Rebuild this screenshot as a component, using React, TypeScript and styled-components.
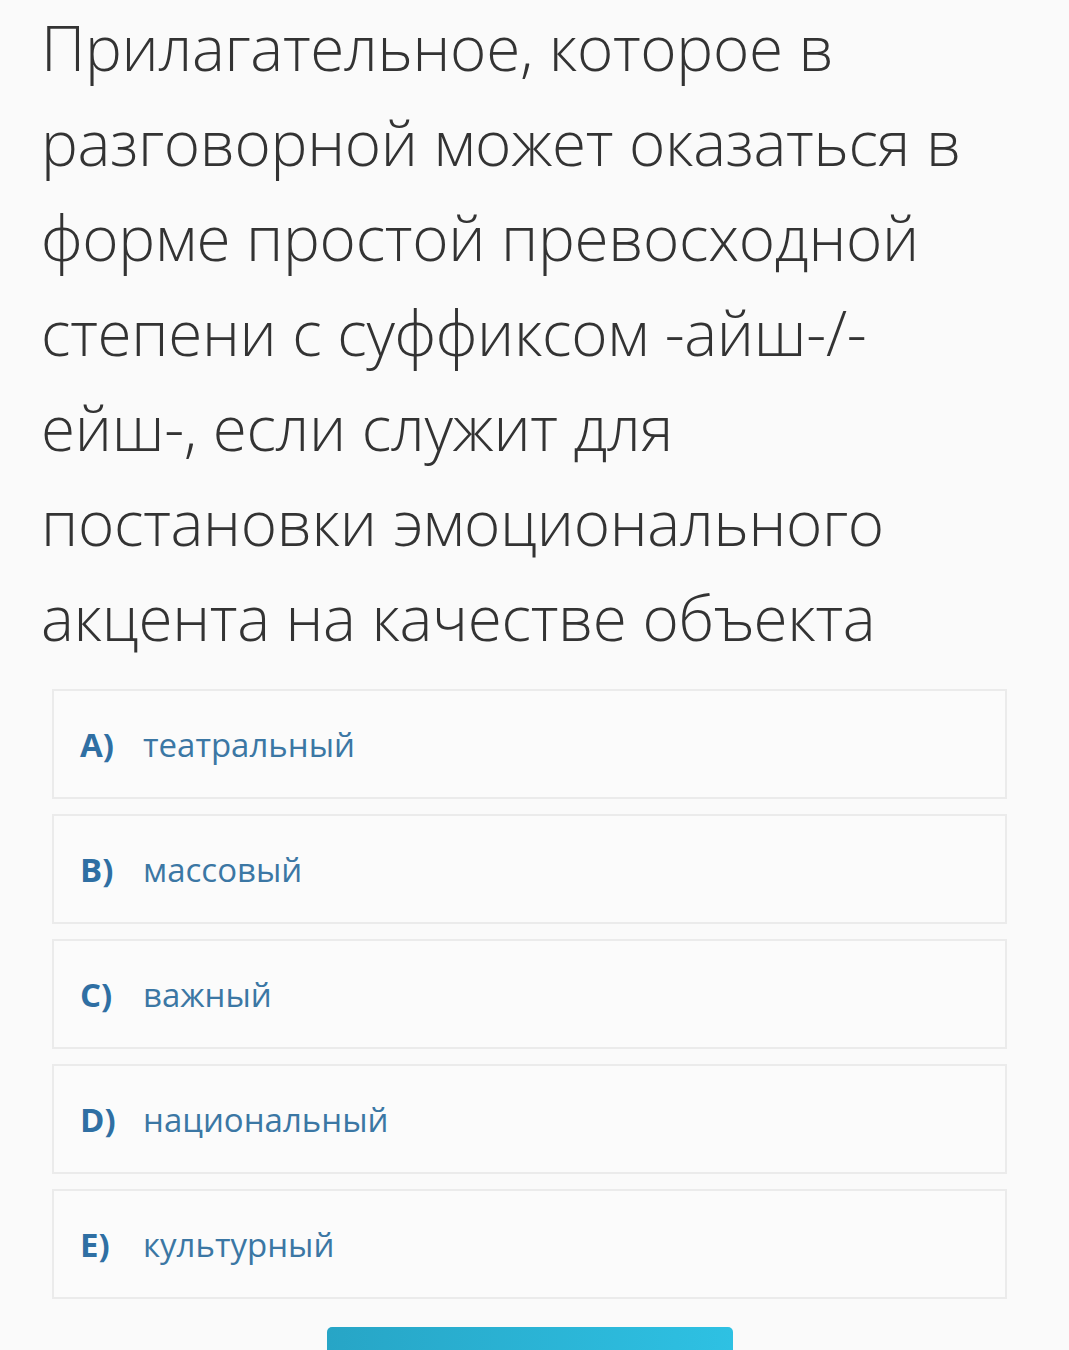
import { createGlobalStyle, styled } from "styled-components";

const GlobalStyle = createGlobalStyle`
  html, body {
    margin: 0;
    padding: 0;
    background: #fafafa;
  }
  body {
    font-family: "Open Sans", "Noto Sans", sans-serif;
  }
`;

const Page = styled.div`
  padding: 0 0 0 41px;
  height: 1350px;
  box-sizing: border-box;
  overflow: hidden;
`;

const Question = styled.h1`
  margin: 0;
  width: 960px;
  font-size: 62px;
  font-weight: 300;
  line-height: 95px;
  letter-spacing: -0.3px;
  color: #333;
`;

const Answers = styled.div`
  display: flex;
  flex-direction: column;
  gap: 15px;
  margin: 24px 0 0 11px;
  width: 955px;
`;

const Answer = styled.div`
  display: flex;
  align-items: center;
  height: 110px;
  box-sizing: border-box;
  padding: 0 26px;
  border: 2px solid #ebebeb;
  background: #fbfbfb;
  color: #3b77a4;
  font-size: 33px;
`;

const Letter = styled.span`
  width: 63px;
  font-weight: 700;
  color: #2f6fa3;
`;

const Submit = styled.div`
  width: 406px;
  height: 40px;
  margin: 28px 0 0 286px;
  border-radius: 5px;
  background: linear-gradient(90deg, #27a5c6, #2ec1e3);
`;

const answers = [
  ["A)", "театральный"],
  ["B)", "массовый"],
  ["C)", "важный"],
  ["D)", "национальный"],
  ["E)", "культурный"],
];

export default function App() {
  return (
    <Page>
      <GlobalStyle />
      <Question>
        Прилагательное, которое в разговорной может оказаться в форме простой
        превосходной степени с суффиксом -айш-/-ейш-, если служит для
        постановки эмоционального акцента на качестве объекта
      </Question>
      <Answers>
        {answers.map(([letter, text]) => (
          <Answer key={letter}>
            <Letter>{letter}</Letter>
            {text}
          </Answer>
        ))}
      </Answers>
      <Submit />
    </Page>
  );
}
